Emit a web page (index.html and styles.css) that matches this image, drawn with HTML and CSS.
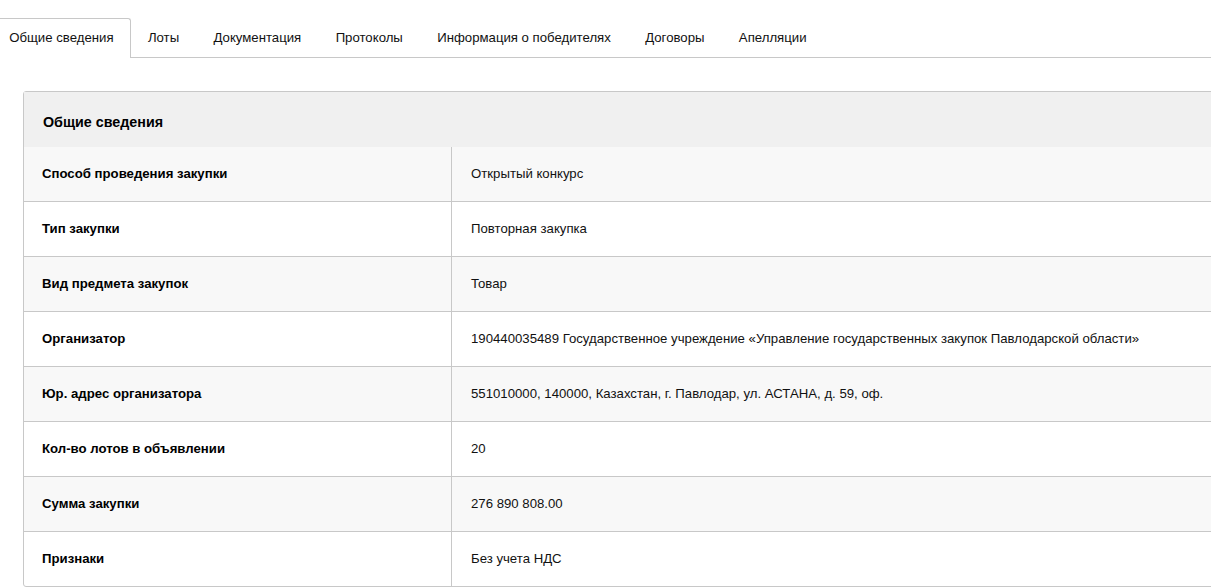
FILE: index.html
```html
<!DOCTYPE html>
<html lang="ru">
<head>
    <meta charset="UTF-8">
    <title>Общие сведения</title>
    <link rel="stylesheet" href="styles.css">
</head>
<body>

<div class="page">
    <!-- Tabs -->
    <div class="tabs">
        <div class="tab active">Общие сведения</div>
        <div class="tab">Лоты</div>
        <div class="tab">Документация</div>
        <div class="tab">Протоколы</div>
        <div class="tab">Информация о победителях</div>
        <div class="tab">Договоры</div>
        <div class="tab">Апелляции</div>
    </div>

    <!-- General info panel -->
    <div class="panel">
        <div class="panel-heading">Общие сведения</div>
        <div class="row">
            <div class="label">Способ проведения закупки</div>
            <div class="value">Открытый конкурс</div>
        </div>
        <div class="row">
            <div class="label">Тип закупки</div>
            <div class="value">Повторная закупка</div>
        </div>
        <div class="row">
            <div class="label">Вид предмета закупок</div>
            <div class="value">Товар</div>
        </div>
        <div class="row">
            <div class="label">Организатор</div>
            <div class="value">190440035489 Государственное учреждение «Управление государственных закупок Павлодарской области»</div>
        </div>
        <div class="row">
            <div class="label">Юр. адрес организатора</div>
            <div class="value">551010000, 140000, Казахстан, г. Павлодар, ул. АСТАНА, д. 59, оф.</div>
        </div>
        <div class="row">
            <div class="label">Кол-во лотов в объявлении</div>
            <div class="value">20</div>
        </div>
        <div class="row">
            <div class="label">Сумма закупки</div>
            <div class="value">276 890 808.00</div>
        </div>
        <div class="row">
            <div class="label">Признаки</div>
            <div class="value">Без учета НДС</div>
        </div>
    </div>
</div>

</body>
</html>
```

FILE: styles.css
```css
/* Base */
html, body {
    margin: 0;
    padding: 0;
    overflow: hidden;
    background-color: #ffffff;
}

body {
    font-family: "Liberation Sans", Arial, sans-serif;
    font-size: 13.2px;
    color: #111111;
}

.page {
    width: 100%;
    overflow: hidden;
}

/* Tabs */
.tabs {
    display: flex;
    margin-top: 18px;
    border-bottom: 1px solid #c8c8c8;
}

.tab {
    height: 39px;
    line-height: 37px;
    padding: 0 16.2px;
    border: 1px solid transparent;
    border-bottom: none;
    white-space: nowrap;
    box-sizing: border-box;
    margin-bottom: -1px;
    cursor: pointer;
}

.tab:first-child {
    margin-left: -8px;
}

.tab.active {
    height: 40px;
    border-color: #c8c8c8;
    border-radius: 3px 3px 0 0;
    background-color: #ffffff;
}

/* Panel */
.panel {
    width: 1400px;
    margin: 33px 0 0 23px;
    border: 1px solid #c8c8c8;
    border-radius: 3px;
}

.panel-heading {
    height: 49px;
    padding: 6px 0 0 19px;
    line-height: 49px;
    background-color: #f0f0f0;
    font-weight: bold;
    font-size: 14.3px;
    color: #000000;
}

.row {
    display: grid;
    grid-template-columns: 428px 1fr;
    height: 55px;
    box-sizing: border-box;
    border-bottom: 1px solid #c8c8c8;
}

.row:nth-child(even) {
    background-color: #f8f8f8;
}

.row:last-child {
    border-bottom: none;
    height: 54px;
}

.label {
    border-right: 1px solid #c8c8c8;
    padding-left: 18px;
    line-height: 54px;
    font-weight: bold;
    color: #000000;
}

.value {
    padding-left: 19px;
    line-height: 54px;
    white-space: nowrap;
}
```
